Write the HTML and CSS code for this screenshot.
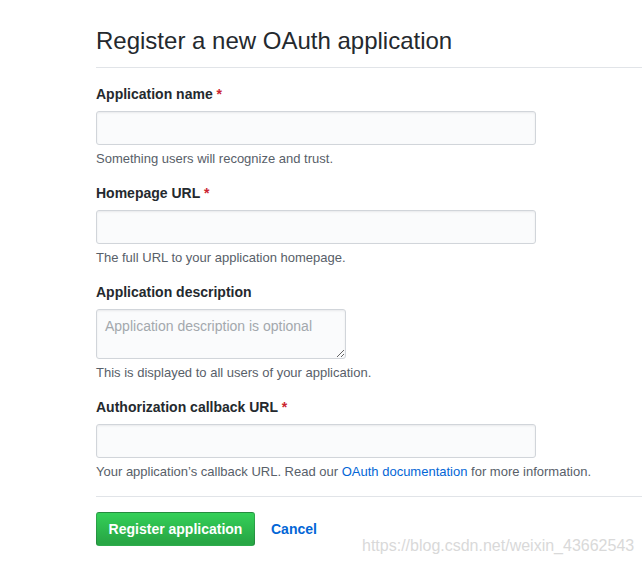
FILE: index.html
```html
<!DOCTYPE html>
<html lang="en">
<head>
<meta charset="utf-8">
<title>Register a new OAuth application</title>
<link rel="stylesheet" href="styles.css">
</head>
<body>
<div class="page">
  <div class="subhead">
    <h2 class="subhead-heading">Register a new OAuth application</h2>
  </div>
  <form class="form">
    <dl class="form-group">
      <dt><label>Application name <span class="req">*</span></label></dt>
      <dd><input class="form-control" type="text"></dd>
      <dd class="note">Something users will recognize and trust.</dd>
    </dl>
    <dl class="form-group">
      <dt><label>Homepage URL <span class="req">*</span></label></dt>
      <dd><input class="form-control" type="text"></dd>
      <dd class="note">The full URL to your application homepage.</dd>
    </dl>
    <dl class="form-group">
      <dt><label>Application description</label></dt>
      <dd><textarea class="form-control short" placeholder="Application description is optional"></textarea></dd>
      <dd class="note">This is displayed to all users of your application.</dd>
    </dl>
    <dl class="form-group">
      <dt><label>Authorization callback URL <span class="req">*</span></label></dt>
      <dd><input class="form-control" type="text"></dd>
      <dd class="note">Your application’s callback URL. Read our <a href="#">OAuth documentation</a> for more information.</dd>
    </dl>
    <div class="actions">
      <button type="button" class="btn-primary">Register application</button>
      <a href="#" class="cancel">Cancel</a>
    </div>
  </form>
</div>
<div class="watermark">https://blog.csdn.net/weixin_43662543</div>
</body>
</html>
```
FILE: styles.css
```css
html, body {
  margin: 0;
  padding: 0;
  background: #fff;
}
body {
  font-family: "Liberation Sans", Arial, sans-serif;
  font-size: 14px;
  color: #24292e;
  width: 642px;
  height: 564px;
  overflow: hidden;
  position: relative;
}
.page {
  padding-left: 96px;
  padding-top: 25px;
}
.subhead {
  border-bottom: 1px solid #e1e4e8;
  padding-bottom: 11px;
}
.subhead-heading {
  margin: 0;
  font-size: 24px;
  font-weight: 400;
  line-height: 31px;
}
.form {
  padding-top: 16px;
}
.form-group {
  margin: 0 0 15px 0;
}
.form-group dt {
  margin: 0 0 7px 0;
  line-height: 20px;
}
.form-group dt label {
  font-weight: 700;
  font-size: 14px;
}
.req {
  color: #cb2431;
}
.form-group dd {
  margin: 0;
}
.form-control {
  display: block;
  box-sizing: border-box;
  width: 440px;
  height: 34px;
  padding: 6px 8px;
  font-family: "Liberation Sans", Arial, sans-serif;
  font-size: 14px;
  color: #24292e;
  background: #fafbfc;
  border: 1px solid #d1d5da;
  border-radius: 3px;
  box-shadow: inset 0 1px 2px rgba(27, 31, 35, 0.075);
  outline: none;
}
textarea.short {
  width: 250px;
  height: 50px;
  line-height: 20px;
  padding: 6px 8px;
  resize: vertical;
}
textarea.short::placeholder {
  color: #a3a8ad;
}
.note {
  margin-top: 4px !important;
  font-size: 13px;
  line-height: 19px;
  color: #586069;
}
.note a {
  color: #0366d6;
  text-decoration: none;
}
.actions {
  border-top: 1px solid #e1e4e8;
  margin-top: 15px;
  padding-top: 15px;
  display: flex;
  align-items: center;
  gap: 16px;
}
.btn-primary {
  box-sizing: border-box;
  height: 34px;
  width: 159px;
  padding: 0;
  white-space: nowrap;
  font-family: "Liberation Sans", Arial, sans-serif;
  font-size: 14px;
  font-weight: 700;
  color: #fff;
  background: linear-gradient(-180deg, #34d058 0%, #28a745 90%);
  border: 1px solid rgba(27, 31, 35, 0.2);
  border-radius: 3px;
}
.cancel {
  color: #0366d6;
  font-weight: 700;
  font-size: 14px;
  text-decoration: none;
}
.watermark {
  position: absolute;
  left: 362px;
  top: 537px;
  font-size: 16px;
  color: #d9d9d9;
  white-space: nowrap;
}
```
